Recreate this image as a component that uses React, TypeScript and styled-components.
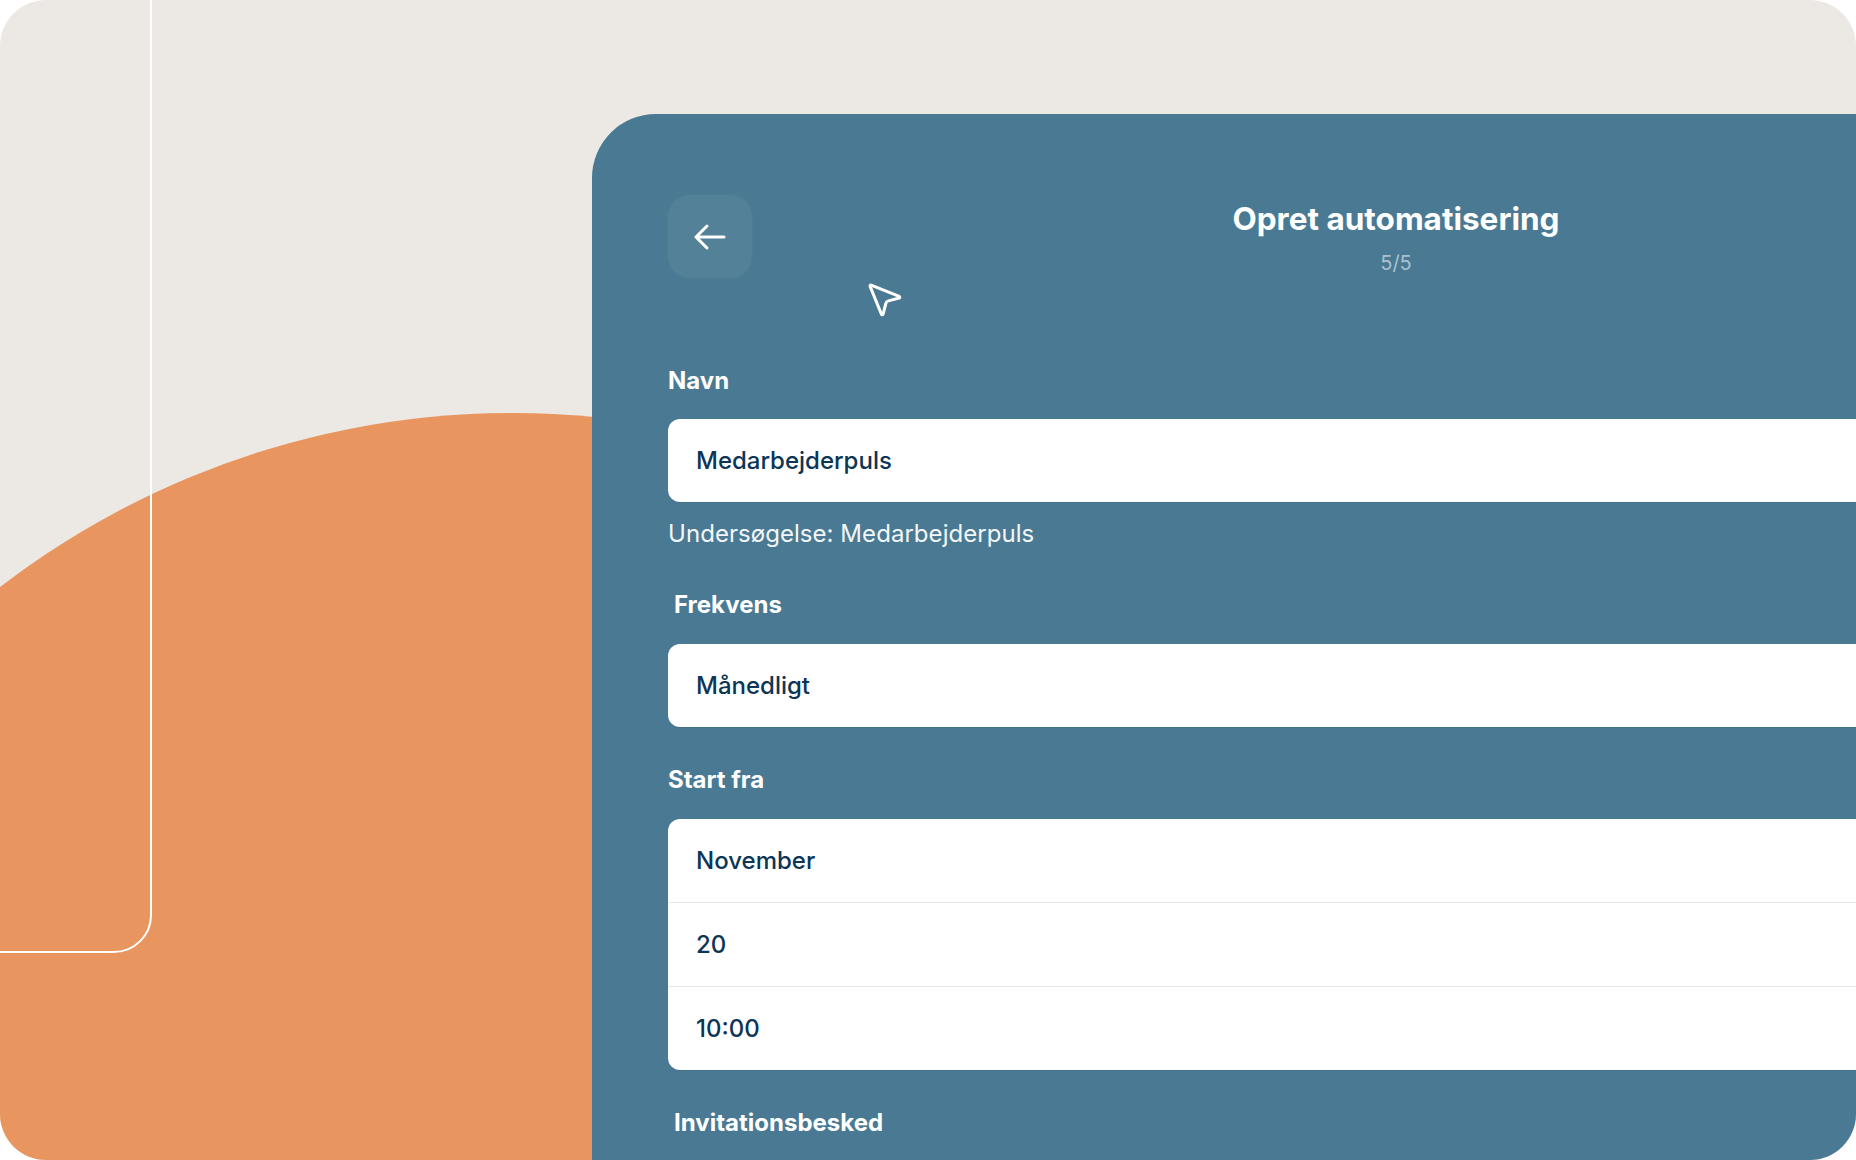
import React from "react";
import styled, { createGlobalStyle } from "styled-components";
import { MousePointer2 } from "lucide-react";

const GlobalStyle = createGlobalStyle`
  html, body {
    margin: 0;
    padding: 0;
    background: #ffffff;
  }
  body {
    font-family: Inter, "Noto Sans", "Liberation Sans", sans-serif;
    -webkit-font-smoothing: antialiased;
  }
  * { box-sizing: border-box; }
`;

const Frame = styled.div`
  position: relative;
  width: 1856px;
  height: 1160px;
  border-radius: 46px;
  overflow: hidden;
  background: #ece9e4;
  padding: 114px 0 0 592px;
`;

const Sun = styled.div`
  position: absolute;
  left: -328px;
  top: 413px;
  width: 1680px;
  height: 1680px;
  border-radius: 50%;
  background: #e8955f;
  z-index: 0;
`;

const Outline = styled.div`
  position: absolute;
  left: -200px;
  top: -200px;
  width: 352px;
  height: 1153px;
  border: 2px solid #ffffff;
  border-radius: 38px;
  z-index: 0;
`;

const Panel = styled.section`
  position: relative;
  z-index: 1;
  width: 1608px;
  height: 1100px;
  background: #4a7a93;
  border-radius: 64px 64px 0 0;
  padding: 81px 76px 0;
`;

const Header = styled.header`
  display: grid;
  grid-template-columns: 1fr auto 1fr;
  align-items: start;
`;

const BackButton = styled.button`
  justify-self: start;
  width: 84px;
  height: 83px;
  border: none;
  border-radius: 22px;
  background: rgba(255, 255, 255, 0.055);
  box-shadow: 0 0 6px rgba(255, 255, 255, 0.03);
  display: flex;
  align-items: center;
  justify-content: center;
  padding: 0;
  cursor: pointer;
`;

const TitleBlock = styled.div`
  padding-top: 6px;
  display: flex;
  flex-direction: column;
  align-items: center;
  gap: 14px;
`;

const Title = styled.h1`
  margin: 0;
  font: 700 31.5px/36px Inter, "Liberation Sans", sans-serif;
  color: #ffffff;
`;

const Step = styled.div`
  font: 400 20px/24px Inter, "Liberation Sans", sans-serif;
  color: #a9c1ce;
`;

const Pointer = styled.div`
  position: absolute;
  left: 271px;
  top: 164px;
  width: 42px;
  height: 42px;
  color: #ffffff;
  pointer-events: none;
`;

const Form = styled.div`
  margin-top: 89px;
  display: flex;
  flex-direction: column;
`;

const Label = styled.div<{ $indent?: number; $top?: number }>`
  margin-top: ${(p) => p.$top ?? 0}px;
  padding-left: ${(p) => p.$indent ?? 0}px;
  font: 700 24px/28px Inter, "Liberation Sans", sans-serif;
  color: #ffffff;
`;

const Field = styled.div<{ $top?: number }>`
  margin-top: ${(p) => p.$top ?? 0}px;
  height: 83px;
  background: #ffffff;
  border-radius: 12px;
  box-shadow: 0 1px 0 rgba(20, 50, 70, 0.12);
  display: flex;
  align-items: center;
  padding-left: 28px;
  font: 500 24px/28px Inter, "Liberation Sans", sans-serif;
  color: #0c3556;
`;

const Helper = styled.div<{ $top?: number }>`
  margin-top: ${(p) => p.$top ?? 0}px;
  font: 400 24px/28px Inter, "Liberation Sans", sans-serif;
  letter-spacing: 0.05px;
  color: #f3f6f8;
`;

const Group = styled.div<{ $top?: number }>`
  margin-top: ${(p) => p.$top ?? 0}px;
  background: #ffffff;
  border-radius: 12px;
  overflow: hidden;
  box-shadow: 0 1px 0 rgba(20, 50, 70, 0.12);
`;

const GroupRow = styled.div`
  height: 83px;
  display: flex;
  align-items: center;
  padding-left: 28px;
  font: 500 24px/28px Inter, "Liberation Sans", sans-serif;
  color: #0c3556;
  box-sizing: content-box;

  & + & {
    border-top: 1px solid #e4e9ee;
  }
`;

const BackArrow = () => (
  <svg width="34" height="28" viewBox="0 0 34 28" fill="none">
    <path
      d="M31 14H3M14 3L3 14L14 25"
      stroke="#ffffff"
      strokeWidth="3"
      strokeLinecap="round"
      strokeLinejoin="round"
    />
  </svg>
);

export default function App() {
  return (
    <>
      <GlobalStyle />
      <Frame>
        <Sun />
        <Outline />
        <Panel>
          <Header>
            <BackButton aria-label="Tilbage">
              <BackArrow />
            </BackButton>
            <TitleBlock>
              <Title>Opret automatisering</Title>
              <Step>5/5</Step>
            </TitleBlock>
            <div />
          </Header>
          <Pointer>
            <MousePointer2 size={42} strokeWidth={1.75} />
          </Pointer>
          <Form>
            <Label>Navn</Label>
            <Field $top={24}>Medarbejderpuls</Field>
            <Helper $top={18}>Undersøgelse: Medarbejderpuls</Helper>
            <Label $indent={6} $top={43}>
              Frekvens
            </Label>
            <Field $top={25}>Månedligt</Field>
            <Label $top={39}>Start fra</Label>
            <Group $top={25}>
              <GroupRow>November</GroupRow>
              <GroupRow>20</GroupRow>
              <GroupRow>10:00</GroupRow>
            </Group>
            <Label $indent={6} $top={39}>
              Invitationsbesked
            </Label>
          </Form>
        </Panel>
      </Frame>
    </>
  );
}
